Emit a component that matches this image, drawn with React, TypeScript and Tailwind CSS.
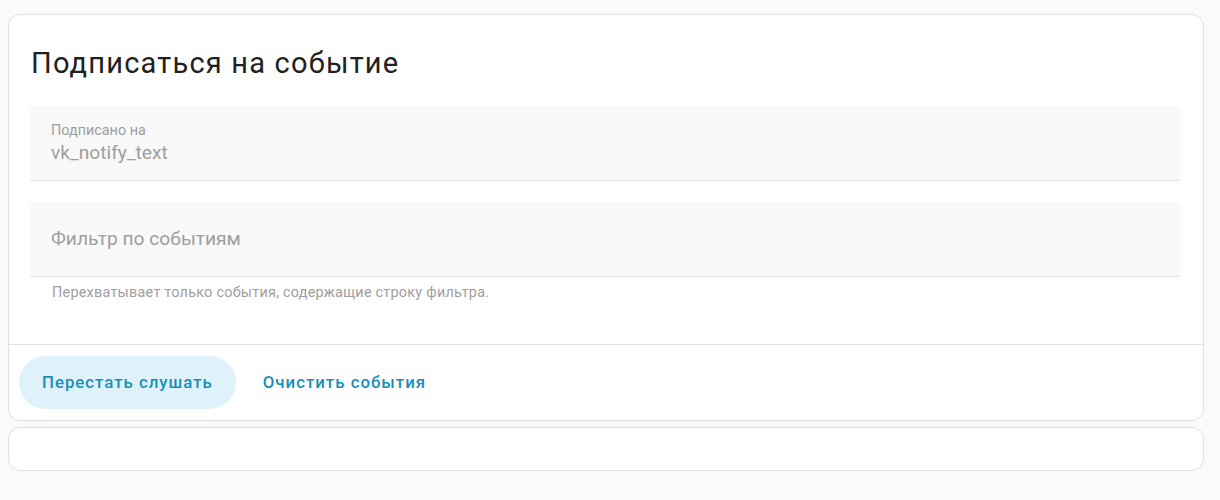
export default function App() {
  return (
    <main
      className="w-[1220px] h-[500px] bg-[#fafafa] pt-[14px] pl-[8px]"
      style={{ fontFamily: "Roboto, 'Noto Sans', sans-serif" }}
    >
      <div className="w-[1196px] bg-white border border-[#e0e0e0] rounded-[12px]">
        <div className="pl-[21px] pr-[23px] pt-[30px]">
          <h1 className="text-[29px] leading-[36px] tracking-[1.2px] text-[#212121] pl-[1px]">
            Подписаться на событие
          </h1>
          <div className="mt-[25px] h-[75px] bg-[#f9f9f9] border-b border-[#e3e3e3] rounded-t-[4px] pl-[21px] pt-[16px]">
            <div className="text-[14.4px] leading-[18px] text-[#9e9e9e]">Подписано на</div>
            <div className="text-[19.2px] leading-[26px] text-[#9e9e9e]">vk_notify_text</div>
          </div>
          <div className="mt-[21px] h-[75px] bg-[#f9f9f9] border-b border-[#e3e3e3] rounded-t-[4px] pl-[21px] flex items-center">
            <span className="text-[19.2px] leading-[24px] text-[#9e9e9e]">Фильтр по событиям</span>
          </div>
          <p className="text-[14.4px] leading-[16px] tracking-[0.25px] text-[#9e9e9e] pl-[22px] mt-[8px] pb-[43px]">
            Перехватывает только события, содержащие строку фильтра.
          </p>
        </div>
        <div className="border-t border-[#e0e0e0] px-[10px] pt-[11px] pb-[11px] flex items-center gap-[4px]">
          <button className="h-[53px] px-[23px] rounded-full bg-[#dff2fb] text-[#1590b9] text-[16.8px] tracking-[1px] font-medium">
            Перестать слушать
          </button>
          <button className="h-[53px] px-[23px] rounded-full text-[#1590b9] text-[16.8px] tracking-[1px] font-medium">
            Очистить события
          </button>
        </div>
      </div>
      <div className="mt-[6px] w-[1196px] h-[44px] bg-white border border-[#e0e0e0] rounded-[12px]" />
    </main>
  );
}
